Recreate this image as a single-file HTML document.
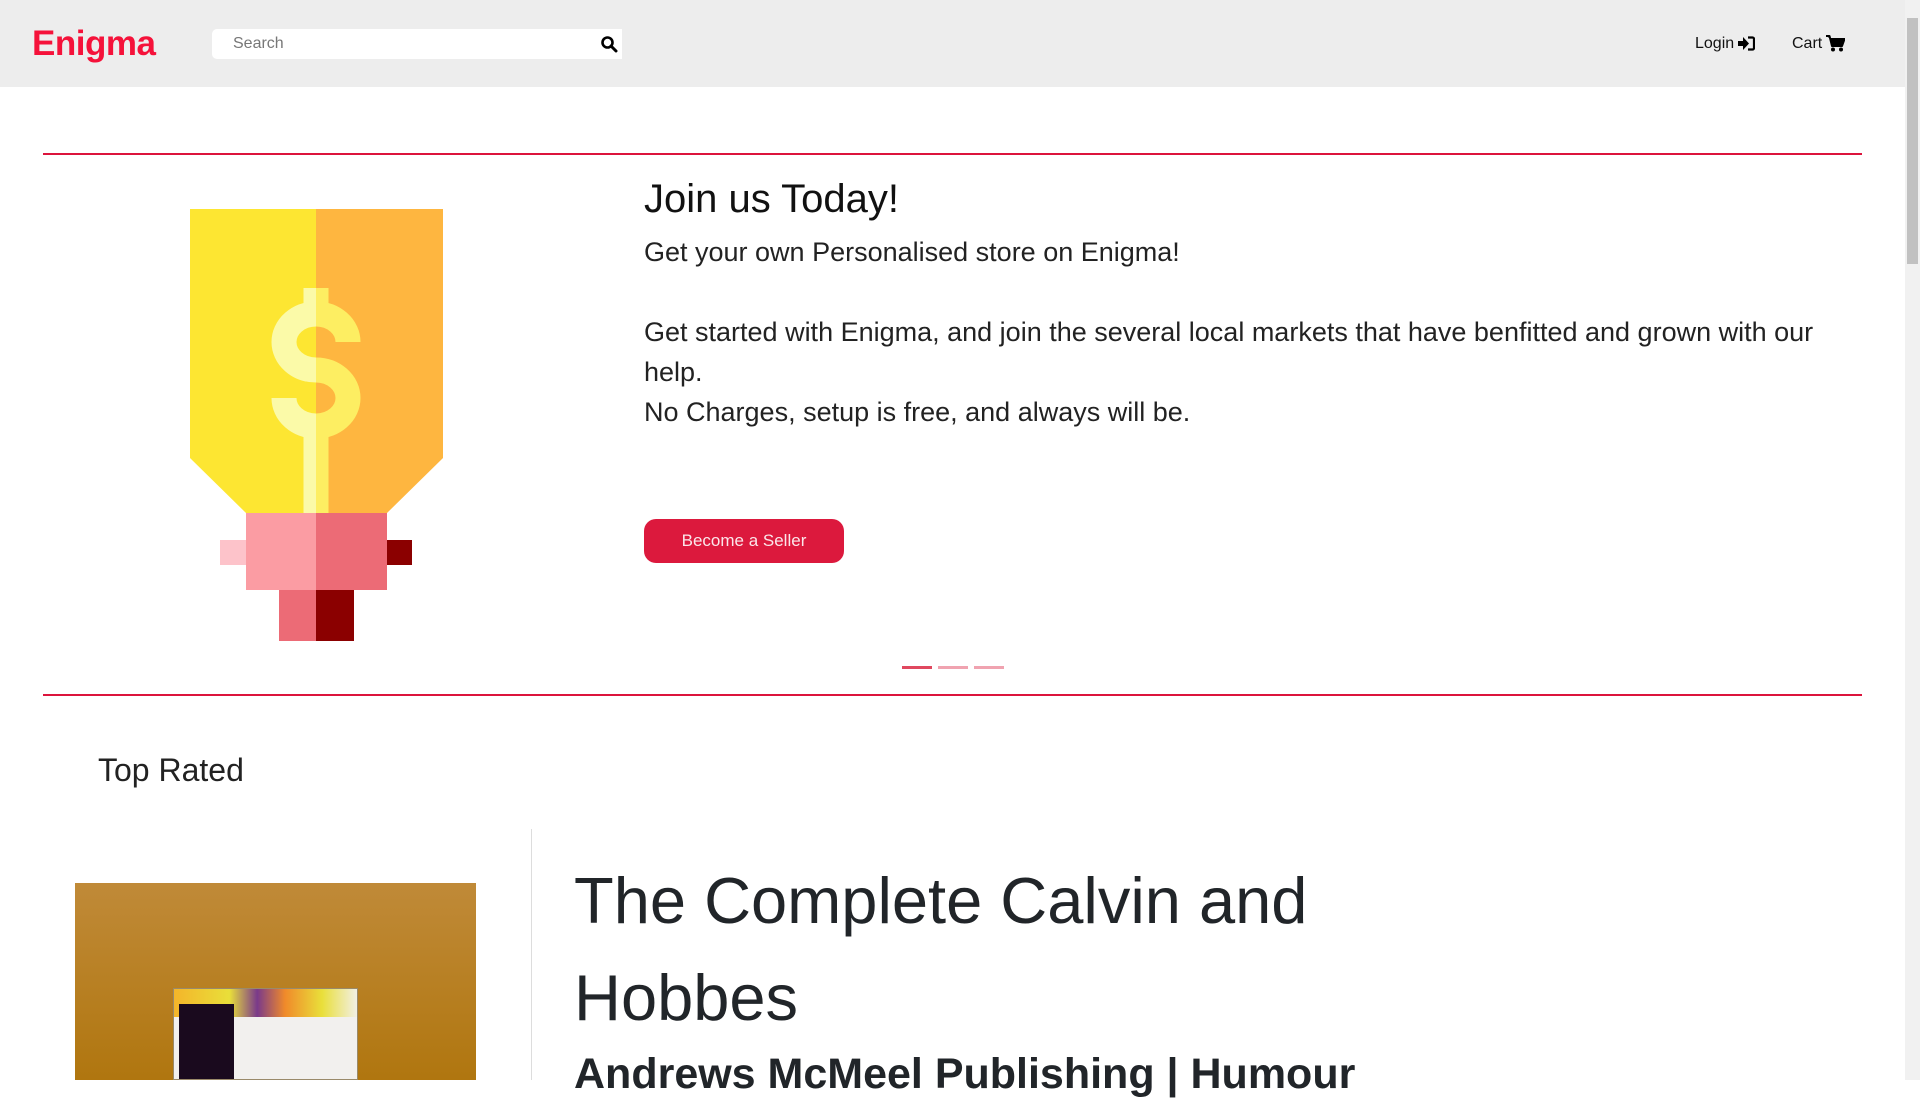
<!DOCTYPE html>
<html><head><meta charset="utf-8"><style>
*{margin:0;padding:0;box-sizing:border-box}
html,body{width:1920px;height:1080px;overflow:hidden;background:#fff;font-family:"Liberation Sans",Arial,sans-serif;color:#212529}
.abs{position:absolute}
nav{position:absolute;left:0;top:0;width:1905px;height:87px;background:#ededed}
.logo{left:32px;top:24px;font-size:35px;font-weight:bold;color:#f5123a;letter-spacing:-0.5px}
.search{left:212px;top:29px;width:410px;height:30px;background:#fff;border-radius:5px 0 0 5px}
.search span{position:absolute;left:21px;top:6px;font-size:16px;color:#777}
.nl{font-size:16px;color:#111;top:35px}
.sb{left:1905px;top:0;width:15px;height:1080px;background:#f1f1f1}
.thumb{left:1907px;top:18px;width:11px;height:246px;background:#c1c1c1}
.hr{height:2px;background:#dc143c;left:43px;width:1819px}
h1{font-weight:normal;font-size:40px;color:#111}
.p{font-size:27px;line-height:40px;color:#222;width:1215px}
.btn{left:644px;top:519px;width:200px;height:44px;border-radius:12px;background:#dc193d;color:#fbe6ea;font-size:17px;text-align:center;line-height:44px}
.ind{top:666px;height:3px;width:30px}
</style></head><body>
<nav>
<div class="abs logo">Enigma</div>
<div class="abs search"><span>Search</span>
<svg class="abs" style="left:388px;top:6px" width="18" height="18" viewBox="0 0 18 18"><circle cx="7.5" cy="7.5" r="5" fill="none" stroke="#000" stroke-width="2.6"/><path d="M11 11l5 5" stroke="#000" stroke-width="3" stroke-linecap="round"/></svg></div>
<div class="abs nl" style="left:1695px">Login</div>
<svg class="abs" style="left:1738px;top:36px" width="17" height="15" viewBox="0 0 17 15"><path d="M0 5h5V1l6 6.5-6 6.5V10H0z" fill="#000"/><path d="M10 1.5h4.5a1.5 1.5 0 0 1 1.5 1.5v9a1.5 1.5 0 0 1-1.5 1.5H10" fill="none" stroke="#000" stroke-width="2.2"/></svg>
<div class="abs nl" style="left:1792px">Cart</div>
<svg class="abs" style="left:1826px;top:35px" width="19" height="17" viewBox="0 0 19 17"><path d="M0 1h3.5l2.5 10h10l2.5-7H5" fill="#000" stroke="#000" stroke-width="2" stroke-linejoin="round"/><circle cx="7" cy="14.5" r="2" fill="#000"/><circle cx="15" cy="14.5" r="2" fill="#000"/></svg>
</nav>
<div class="abs sb"></div><div class="abs thumb"></div>
<div class="abs hr" style="top:153px"></div>

<svg class="abs" style="left:0;top:0" width="460" height="660" viewBox="0 0 460 660">
<defs><clipPath id="L"><rect x="0" y="0" width="316" height="660"/></clipPath><clipPath id="R"><rect x="316" y="0" width="200" height="660"/></clipPath></defs>
<path d="M190 209H316V513H246L190 458Z" fill="#fde632"/>
<path d="M316 209H443V458L387 513H316Z" fill="#feb640"/>
<g clip-path="url(#L)" stroke="#fbfaa8" fill="none"><path d="M348 342A32 28 0 1 0 316 370A32 28 0 1 1 284 398" stroke-width="25"/><path d="M316 288V304M316 436V513" stroke-width="25"/></g>
<g clip-path="url(#R)" stroke="#fdee62" fill="none"><path d="M348 342A32 28 0 1 0 316 370A32 28 0 1 1 284 398" stroke-width="25"/><path d="M316 288V304M316 436V513" stroke-width="25"/></g>
<rect x="246" y="513" width="70" height="77" fill="#fb9ca3"/>
<rect x="316" y="513" width="71" height="77" fill="#ec6b76"/>
<rect x="220" y="540" width="26" height="25" fill="#fdc3ca"/>
<rect x="387" y="540" width="25" height="25" fill="#8b0000"/>
<rect x="279" y="590" width="37" height="51" fill="#ec6b76"/>
<rect x="316" y="590" width="38" height="51" fill="#8b0000"/>
</svg>

<h1 class="abs" style="left:644px;top:177px">Join us Today!</h1>
<div class="abs p" style="left:644px;top:232px">Get your own Personalised store on Enigma!<br><br>Get started with Enigma, and join the several local markets that have benfitted and grown with our help.<br>No Charges, setup is free, and always will be.</div>
<div class="abs btn">Become a Seller</div>
<div class="abs ind" style="left:902px;background:#e0485f"></div>
<div class="abs ind" style="left:938px;background:#f0a3b0"></div>
<div class="abs ind" style="left:974px;background:#f0a3b0"></div>
<div class="abs hr" style="top:694px"></div>

<div class="abs" style="left:98px;top:752px;font-size:32px;color:#222">Top Rated</div>
<div class="abs" style="left:531px;top:829px;width:1px;height:251px;background:#ddd"></div>
<div class="abs" style="left:75px;top:883px;width:401px;height:197px;background:linear-gradient(#c08a38,#b0760f)">
<div class="abs" style="left:98px;top:105px;width:185px;height:92px;background:#f2f0ee;border:1px solid #9a8a6a;overflow:hidden">
<div class="abs" style="left:0;top:0;width:185px;height:28px;background:linear-gradient(90deg,#f4b52a,#e9df3a 30%,#7a3a8a 45%,#f08a2a 60%,#e9df3a 80%,#f2f0ee)"></div>
<div class="abs" style="left:5px;top:15px;width:55px;height:80px;background:#1a0a1e"></div>
</div></div>
<div class="abs" style="left:574px;top:852px;font-size:65px;line-height:97px;color:#212529;width:800px">The Complete Calvin and Hobbes</div>
<div class="abs" style="left:574px;top:1050px;font-size:43px;font-weight:bold;color:#212529;white-space:nowrap">Andrews McMeel Publishing | Humour</div>
</body></html>
